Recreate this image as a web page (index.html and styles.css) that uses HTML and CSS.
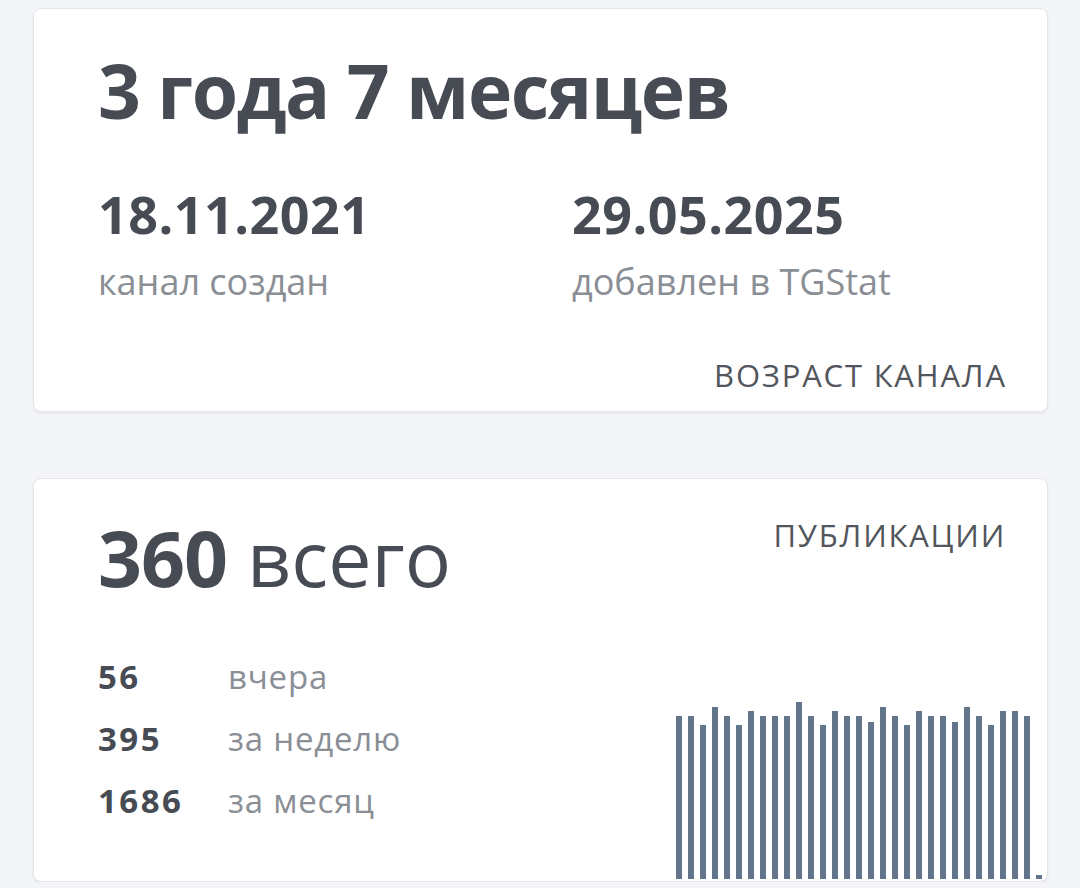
FILE: index.html
```html
<!DOCTYPE html>
<html lang="ru">
  <head>
    <meta name="viewport" content="width=device-width, initial-scale=1.0" />
    <title>Статистика канала</title>
    <link rel="stylesheet" href="styles.css">
  </head>

  <body>
    <div class="page">
      <!-- Channel age -->
      <section class="card age-card">
        <h2 class="big-title">3 года 7 месяцев</h2>
        <div class="dates">
          <div class="date">
            <div class="date-value">18.11.2021</div>
            <div class="date-label">канал создан</div>
          </div>
          <div class="date">
            <div class="date-value">29.05.2025</div>
            <div class="date-label">добавлен в TGStat</div>
          </div>
        </div>
        <div class="card-label">Возраст канала</div>
      </section>

      <!-- Posts -->
      <section class="card posts-card">
        <div class="posts-main">
          <h2 class="big-title"><b>360</b> всего</h2>
          <ul class="stats">
            <li><b>56</b><span>вчера</span></li>
            <li><b>395</b><span>за неделю</span></li>
            <li><b>1686</b><span>за месяц</span></li>
          </ul>
        </div>
        <div class="posts-side">
          <div class="card-label">Публикации</div>
          <div class="chart">
            <div class="bar" style="height: 163px"></div>
            <div class="bar" style="height: 163px"></div>
            <div class="bar" style="height: 154px"></div>
            <div class="bar" style="height: 172px"></div>
            <div class="bar" style="height: 163px"></div>
            <div class="bar" style="height: 154px"></div>
            <div class="bar" style="height: 168px"></div>
            <div class="bar" style="height: 163px"></div>
            <div class="bar" style="height: 163px"></div>
            <div class="bar" style="height: 163px"></div>
            <div class="bar" style="height: 177px"></div>
            <div class="bar" style="height: 163px"></div>
            <div class="bar" style="height: 154px"></div>
            <div class="bar" style="height: 168px"></div>
            <div class="bar" style="height: 163px"></div>
            <div class="bar" style="height: 163px"></div>
            <div class="bar" style="height: 157px"></div>
            <div class="bar" style="height: 172px"></div>
            <div class="bar" style="height: 163px"></div>
            <div class="bar" style="height: 154px"></div>
            <div class="bar" style="height: 168px"></div>
            <div class="bar" style="height: 163px"></div>
            <div class="bar" style="height: 163px"></div>
            <div class="bar" style="height: 157px"></div>
            <div class="bar" style="height: 172px"></div>
            <div class="bar" style="height: 163px"></div>
            <div class="bar" style="height: 154px"></div>
            <div class="bar" style="height: 168px"></div>
            <div class="bar" style="height: 168px"></div>
            <div class="bar" style="height: 163px"></div>
            <div class="bar" style="height: 4px"></div>
          </div>
        </div>
      </section>
    </div>
  </body>
</html>
```

FILE: styles.css
```css
* {
  padding: 0;
  margin: 0;
  box-sizing: border-box;
  font-family: "Open Sans", "Noto Sans", sans-serif;
}

body {
  background-color: #f4f5f8;
  color: #474b53;
}

.page {
  display: flex;
  flex-direction: column;
  gap: 66px;
  padding: 8px 32px 0 33px;
}

.card {
  background-color: #ffffff;
  border: 1px solid #e4e6ea;
  border-radius: 8px;
  box-shadow: 0 2px 3px rgba(0, 0, 0, 0.06);
}

.big-title {
  font-size: 75px;
  font-weight: 700;
  line-height: 1.2;
  letter-spacing: -1.5px;
}

/* Channel age card */
.age-card {
  height: 404px;
  padding: 36px 42px 0 64px;
  display: flex;
  flex-direction: column;
}

.dates {
  display: grid;
  grid-template-columns: 474px auto;
  margin-top: 48px;
}

.date-value {
  font-size: 52px;
  font-weight: 700;
  line-height: 1.2;
  letter-spacing: 0.5px;
}

.date-label {
  font-size: 36px;
  line-height: 1.2;
  color: #8a8e95;
  margin-top: 15px;
}

.card-label {
  font-size: 31px;
  line-height: 1.2;
  text-transform: uppercase;
  color: #52565c;
  letter-spacing: 1.8px;
  text-align: right;
  margin-right: -1.8px;
}

.age-card .card-label {
  margin-top: 53px;
}

/* Posts card */
.posts-card {
  height: 404px;
  padding: 0 5px 0 64px;
  display: flex;
  justify-content: space-between;
}

.posts-main {
  padding-top: 33px;
}

.posts-main .big-title {
  font-size: 77px;
  font-weight: 400;
  letter-spacing: 0;
}

.posts-main .big-title b {
  font-weight: 700;
  letter-spacing: -1px;
}

.stats {
  list-style: none;
  margin-top: 42px;
}

.stats li {
  display: flex;
  font-size: 33px;
  line-height: 62px;
}

.stats b {
  width: 130px;
  letter-spacing: 2.5px;
}

.stats span {
  color: #8a8e95;
  letter-spacing: 0.8px;
}

.posts-side {
  display: flex;
  flex-direction: column;
  justify-content: space-between;
  align-items: flex-end;
  padding-bottom: 2px;
}

.posts-side .card-label {
  margin-top: 38px;
  margin-right: 36px;
}

.chart {
  display: flex;
  align-items: flex-end;
  gap: 6px;
  height: 180px;
}

.bar {
  width: 6px;
  background-color: #62758a;
}
```
